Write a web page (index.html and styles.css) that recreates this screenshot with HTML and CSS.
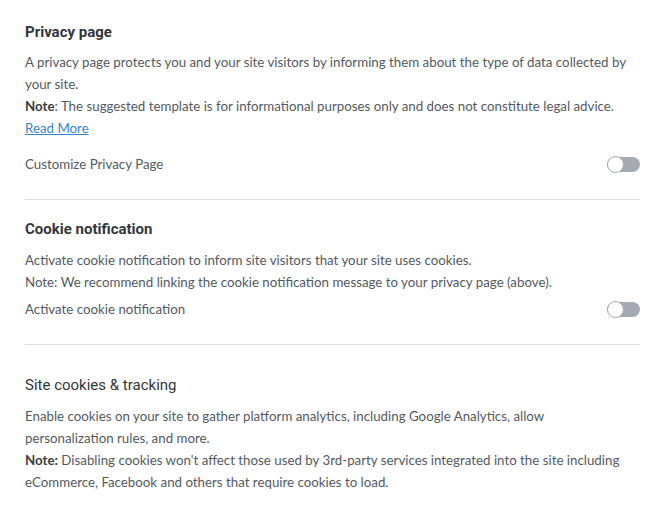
FILE: index.html
```html
<!DOCTYPE html>
<html>
<head>
<meta charset="utf-8">
<link rel="stylesheet" href="styles.css">
</head>
<body>
<main class="page">
  <section class="section first">
    <h2 class="title">Privacy page</h2>
    <p class="desc">A privacy page protects you and your site visitors by informing them about the type of data collected by your site.<br><b>Note</b>: The suggested template is for informational purposes only and does not constitute legal advice.<br><a href="#" class="link">Read More</a></p>
    <div class="row row-a">
      <span class="label">Customize Privacy Page</span>
      <span class="toggle"><span class="knob"></span></span>
    </div>
  </section>
  <section class="section second">
    <h2 class="title">Cookie notification</h2>
    <p class="desc">Activate cookie notification to inform site visitors that your site uses cookies.<br>Note: We recommend linking the cookie notification message to your privacy page (above).</p>
    <div class="row row-b">
      <span class="label">Activate cookie notification</span>
      <span class="toggle"><span class="knob"></span></span>
    </div>
  </section>
  <section class="section third">
    <h2 class="title light">Site cookies &amp; tracking</h2>
    <p class="desc">Enable cookies on your site to gather platform analytics, including Google Analytics, allow personalization rules, and more.<br><b>Note:</b> Disabling cookies won't affect those used by 3rd-party services integrated into the site including eCommerce, Facebook and others that require cookies to load.</p>
  </section>
</main>
</body>
</html>
```
FILE: styles.css
```css
html, body {
  margin: 0;
  padding: 0;
  background: #ffffff;
}
.page {
  width: 615px;
  margin-left: 25px;
  font-family: "Lato", "Liberation Sans", sans-serif;
  font-size: 13.3px;
  color: #555a5f;
}
.section {
  border-bottom: 1px solid #dde0e3;
}
.section.first {
  padding-top: 22px;
  padding-bottom: 24px;
}
.section.second {
  padding-top: 19px;
  padding-bottom: 24px;
}
.section.third {
  border-bottom: none;
  padding-top: 30px;
}
.title {
  margin: 0;
  font-family: "Roboto", "Liberation Sans", sans-serif;
  font-size: 15px;
  line-height: 20px;
  font-weight: 700;
  color: #333639;
}
.title.light {
  font-weight: 400;
}
.desc {
  margin: 9px 0 0;
  line-height: 22px;
}
.second .desc {
  margin-top: 10px;
}
.third .desc {
  margin-top: 10px;
  max-width: 605px;
}
.desc b {
  font-weight: 700;
  color: #3a3d40;
}
.link {
  color: #3a86c8;
  text-decoration: underline;
}
.row {
  display: flex;
  align-items: center;
  justify-content: space-between;
  height: 22px;
}
.row-a {
  margin-top: 14px;
}
.row-b {
  margin-top: 5px;
}
.label {
  line-height: 22px;
}
.toggle {
  position: relative;
  width: 33px;
  height: 15px;
  border-radius: 8px;
  background: #a3aab1;
  display: block;
}
.knob {
  position: absolute;
  left: 0;
  top: -1px;
  width: 15px;
  height: 15px;
  border-radius: 50%;
  background: #ffffff;
  border: 1px solid #a3aab1;
}
```
